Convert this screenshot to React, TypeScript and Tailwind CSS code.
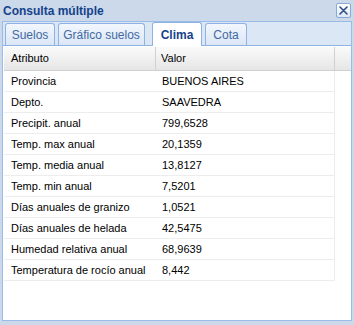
import React from "react";

const rows: [string, string][] = [
  ["Provincia", "BUENOS AIRES"],
  ["Depto.", "SAAVEDRA"],
  ["Precipit. anual", "799,6528"],
  ["Temp. max anual", "20,1359"],
  ["Temp. media anual", "13,8127"],
  ["Temp. min anual", "7,5201"],
  ["Días anuales de granizo", "1,0521"],
  ["Días anuales de helada", "42,5475"],
  ["Humedad relativa anual", "68,9639"],
  ["Temperatura de rocío anual", "8,442"],
];

function Tab({ label, active, w }: { label: string; active?: boolean; w: string }) {
  if (active) {
    return (
      <div
        className={`${w} h-[24px] -mb-px flex items-center justify-center border border-b-0 border-[#8db2e3] rounded-t-[3px] bg-white text-[#15428b] font-bold text-[12px]`}
      >
        {label}
      </div>
    );
  }
  return (
    <div
      className={`${w} h-[22px] flex items-center justify-center border border-b-0 border-[#8db2e3] rounded-t-[3px] bg-gradient-to-b from-[#f3f7fd] to-[#dbe6f6] text-[#416aa3] text-[12px]`}
    >
      {label}
    </div>
  );
}

export default function App() {
  return (
    <div className="w-[354px] h-[325px] bg-[#cbd9ea] flex flex-col px-[2px] pb-[4px] font-['Liberation_Sans',Arial,sans-serif] text-[11px] text-black overflow-hidden">
      <div className="h-[21px] flex items-center justify-between shrink-0">
        <span className="text-[#15428b] font-bold text-[12px] leading-none pl-[1px]">Consulta múltiple</span>
        <div className="w-[15px] h-[15px] mr-[1px] border border-[#8aa9d4] rounded-[2px] bg-gradient-to-b from-white to-[#dde7f5] flex items-center justify-center">
          <svg width="9" height="9" viewBox="0 0 9 9">
            <path d="M1 1 L8 8 M8 1 L1 8" stroke="#2e4f86" strokeWidth="1.6" strokeLinecap="round" />
          </svg>
        </div>
      </div>
      <div className="flex-1 flex flex-col border border-[#99bbe8] bg-white">
        <div className="h-[24px] shrink-0 bg-[#dce7f6] border-b border-[#8db2e3] flex items-end gap-[3px] pl-[2px]">
          <Tab label="Suelos" w="w-[50px]" />
          <Tab label="Gráfico suelos" w="w-[87px]" />
          <div className="w-px" />
          <Tab label="Clima" active w="w-[50px]" />
          <Tab label="Cota" w="w-[42px]" />
        </div>
        <div className="flex-1 bg-white pt-px pl-px">
          <div className="flex h-[24px] border-b border-[#d0d0d0] bg-gradient-to-b from-[#fafafa] to-[#e6e6e6]">
            <div className="w-[152px] border-r border-[#d0d0d0] flex items-center pl-[7px]">Atributo</div>
            <div className="w-[179px] border-r border-[#d0d0d0] flex items-center pl-[5px]">Valor</div>
            <div className="flex-1" />
          </div>
          <div className="w-[331px] border-r border-[#ededed]">
            {rows.map(([a, v]) => (
              <div key={a} className="flex h-[21px] border-b border-[#ededed] items-center">
                <div className="w-[152px] pl-[7px] whitespace-nowrap">{a}</div>
                <div className="pl-[6px] whitespace-nowrap">{v}</div>
              </div>
            ))}
          </div>
        </div>
      </div>
    </div>
  );
}
